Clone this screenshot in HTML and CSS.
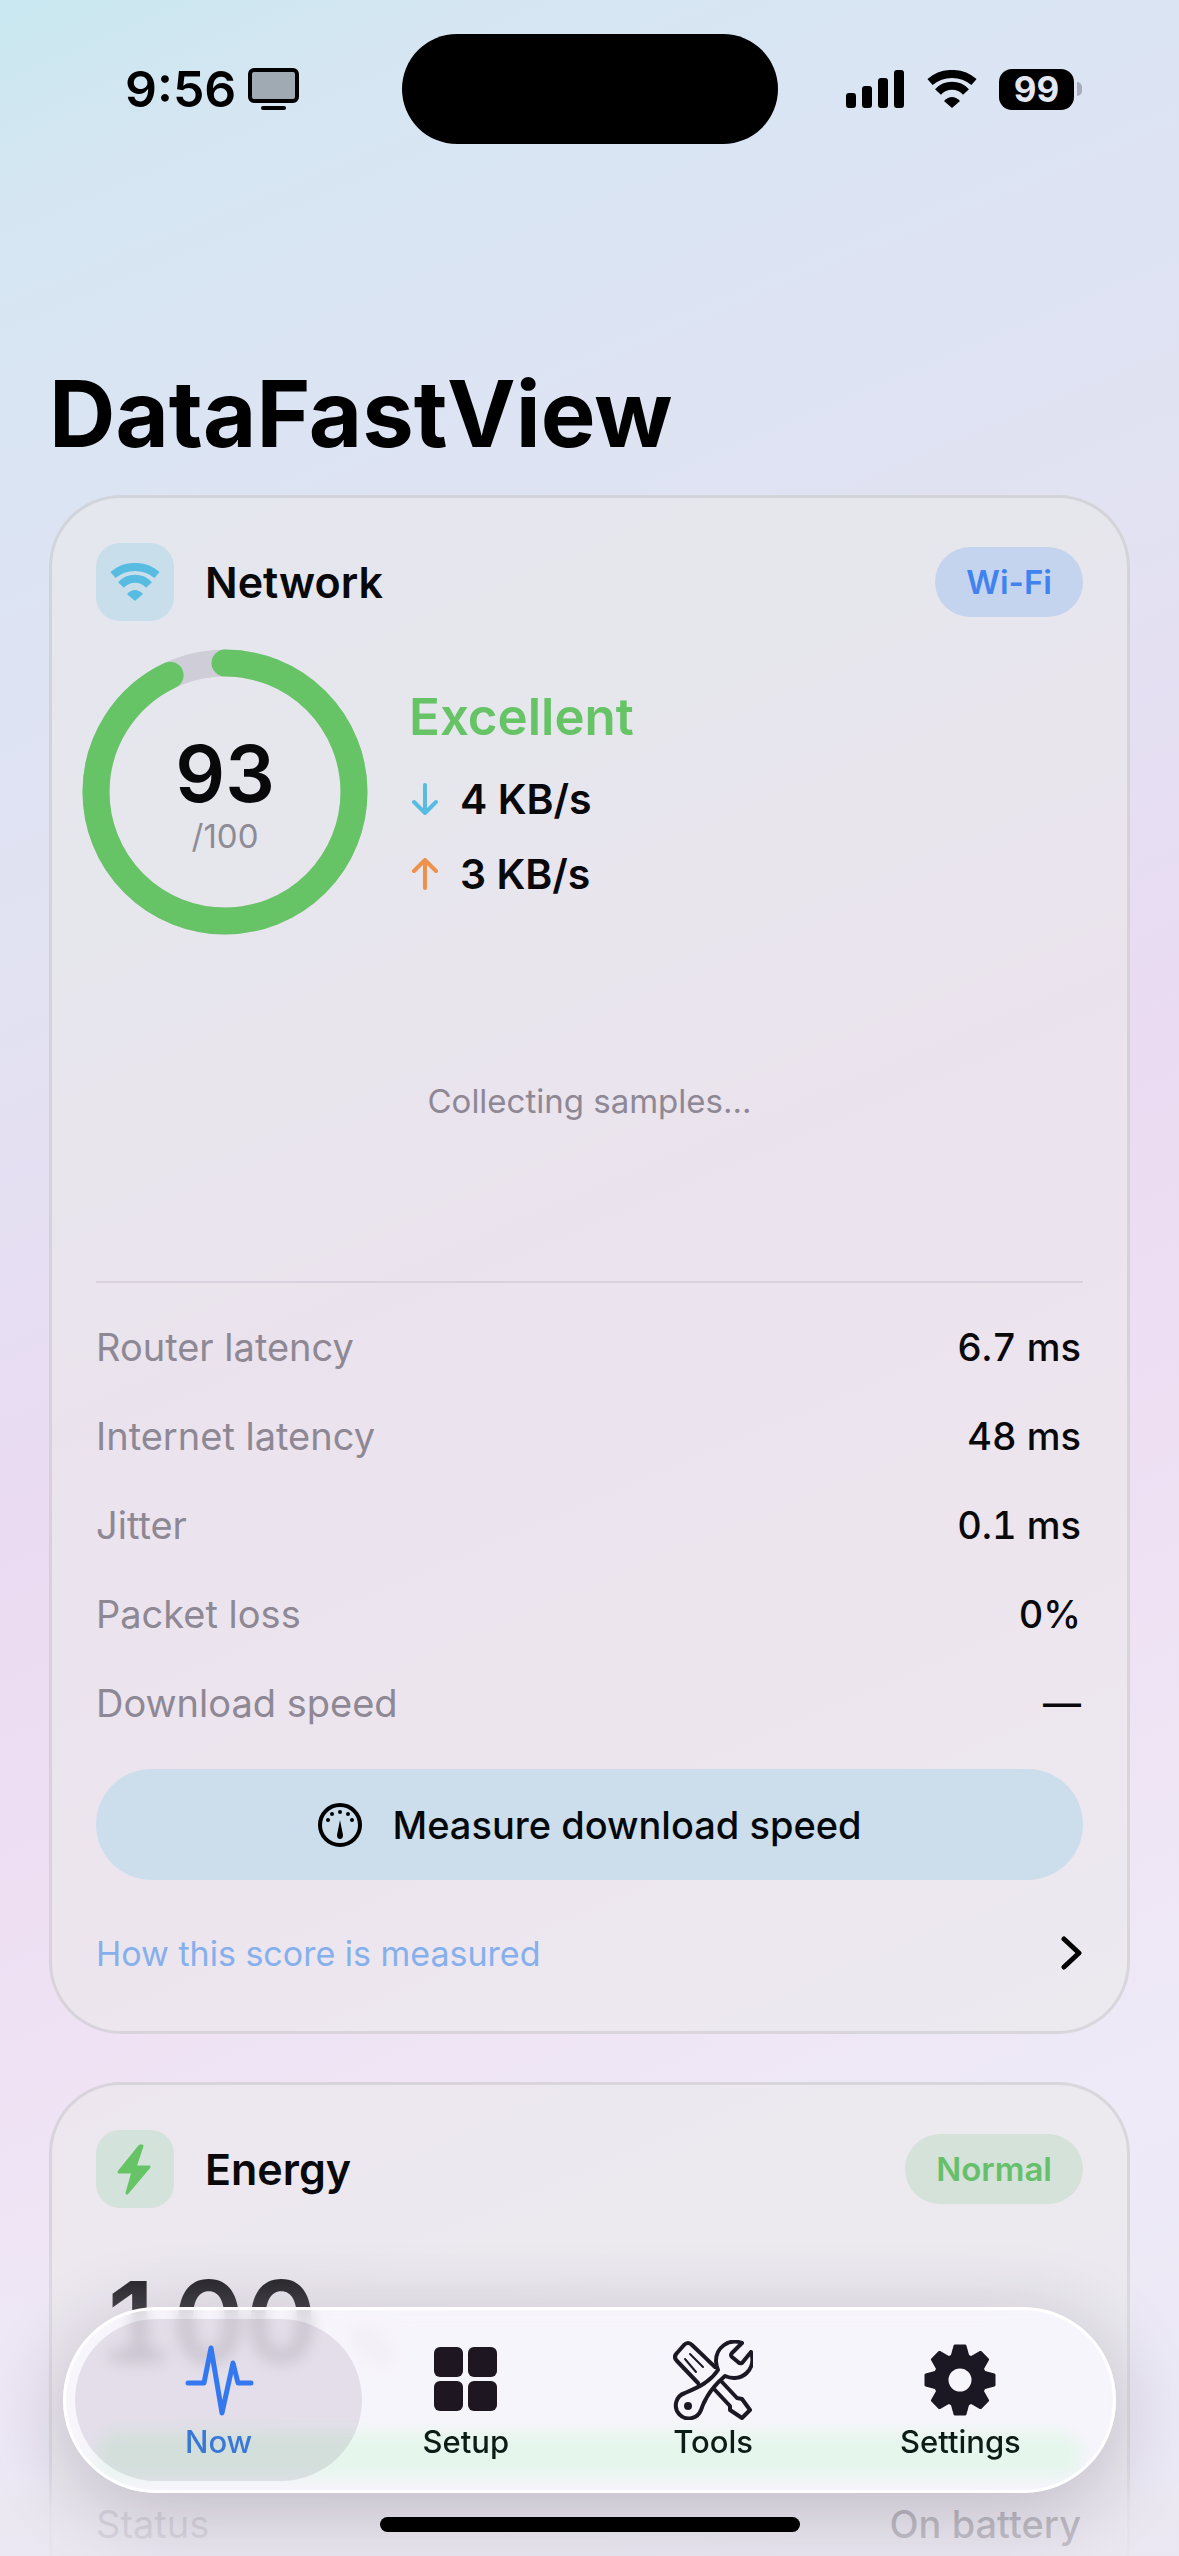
FILE: index.html
```
<!DOCTYPE html>
<html lang="en">
<head>
    <meta charset="utf-8">
    <meta name="viewport" content="width=device-width, initial-scale=1.0">
    <title>DataFastView</title>
    <link rel="stylesheet" href="styles.css">
</head>
<body>
    <div class="screen">
        <div class="statusbar">
            <div class="clock">
                <span>9:56</span>
                <svg width="51" height="42" viewBox="0 0 51 42">
                    <rect x="2" y="2" width="47" height="31" rx="4" fill="#9faab3" stroke="#000" stroke-width="4"/>
                    <rect x="13" y="38" width="25" height="4" rx="2"/>
                </svg>
            </div>
            <div class="island"></div>
            <div class="indicators">
                <svg width="59" height="38" viewBox="0 0 59 38">
                    <rect x="0" y="23" width="10" height="15" rx="3"/>
                    <rect x="16" y="16" width="10" height="22" rx="3"/>
                    <rect x="32" y="8" width="10" height="30" rx="3"/>
                    <rect x="48" y="0" width="10" height="38" rx="3"/>
                </svg>
                <svg width="52" height="38" viewBox="0 0 52 38">
                    <path d="M4 12A34 34 0 0 1 48 12M12 22A19 19 0 0 1 40 22" fill="none" stroke="#000" stroke-width="8"/>
                    <path d="M18 31Q26 23 34 31L26 38Z"/>
                </svg>
                <div class="battery">
                    <span class="level">99</span>
                    <span class="tip"></span>
                </div>
            </div>
        </div>

        <main>
            <h1>DataFastView</h1>

            <section class="card">
                <div class="card-head">
                    <span class="badge blue">
                        <svg width="52" height="38" viewBox="0 0 52 38">
                            <path d="M4 12A34 34 0 0 1 48 12M12 22A19 19 0 0 1 40 22" fill="none" stroke="#58bbe1" stroke-width="8"/>
                            <path d="M18 31Q26 23 34 31L26 38Z" fill="#58bbe1"/>
                        </svg>
                    </span>
                    <h2>Network</h2>
                    <span class="pill wifi">Wi-Fi</span>
                </div>

                <div class="score">
                    <div class="ring">
                        <svg width="286" height="286" viewBox="0 0 286 286">
                            <circle cx="143" cy="143" r="129" fill="none" stroke="#cfcdd7" stroke-width="27"/>
                            <circle cx="143" cy="143" r="129" fill="none" stroke="#66c466" stroke-width="27" stroke-linecap="round" pathLength="100" stroke-dasharray="93 100" transform="rotate(-90 143 143)"/>
                        </svg>
                        <div class="ring-text">
                            <strong>93</strong>
                            <span>/100</span>
                        </div>
                    </div>
                    <div class="rates">
                        <p class="grade">Excellent</p>
                        <p class="rate">
                            <svg width="30" height="32" viewBox="0 0 30 32" fill="none" stroke="#58bbe1" stroke-width="4" stroke-linecap="round" stroke-linejoin="round"><path d="M16 2V29M5 19L16 30L27 19"/></svg>
                            4 KB/s
                        </p>
                        <p class="rate">
                            <svg width="30" height="32" viewBox="0 0 30 32" fill="none" stroke="#ee914a" stroke-width="4" stroke-linecap="round" stroke-linejoin="round"><path d="M16 30V3M5 13L16 2L27 13"/></svg>
                            3 KB/s
                        </p>
                    </div>
                </div>

                <div class="chart">Collecting samples...</div>

                <table class="metrics">
                    <tr><th scope="row">Router latency</th><td>6.7 ms</td></tr>
                    <tr><th scope="row">Internet latency</th><td>48 ms</td></tr>
                    <tr><th scope="row">Jitter</th><td>0.1 ms</td></tr>
                    <tr><th scope="row">Packet loss</th><td>0%</td></tr>
                    <tr><th scope="row">Download speed</th><td>—</td></tr>
                </table>

                <button class="measure" type="button">
                    <svg width="46" height="46" viewBox="0 0 46 46">
                        <circle cx="23" cy="23" r="20" fill="none" stroke="#000" stroke-width="4"/>
                        <circle cx="11" cy="18" r="2"/>
                        <circle cx="15" cy="12" r="2"/>
                        <circle cx="23" cy="10" r="2"/>
                        <circle cx="31" cy="12" r="2"/>
                        <circle cx="35" cy="18" r="2"/>
                        <path d="M23 18L26 33A3 4 0 0 1 20 33Z"/>
                    </svg>
                    Measure download speed
                </button>

                <a class="more" href="#score">
                    How this score is measured
                    <svg width="22" height="34" viewBox="0 0 22 34"><path d="M3 3L18 17L3 31" fill="none" stroke="#000" stroke-width="5" stroke-linecap="round" stroke-linejoin="round"/></svg>
                </a>
            </section>

            <section class="card">
                <div class="card-head">
                    <span class="badge green">
                        <svg width="78" height="78" viewBox="0 0 78 78"><path d="M44 16L23 42H37L31 63L53 37H39L46 16Z" fill="#66c466" stroke="#66c466" stroke-width="3" stroke-linejoin="round"/></svg>
                    </span>
                    <h2>Energy</h2>
                    <span class="pill normal">Normal</span>
                </div>
                <p class="charge">100 <small>%</small></p>
                <div class="charge-bar"></div>
                <table class="metrics plain">
                    <tr><th scope="row">Status</th><td>On battery</td></tr>
                </table>
            </section>
        </main>

        <div class="fade"></div>

        <nav class="tabbar">
            <a class="tab active" href="#now">
                <svg width="80" height="80" viewBox="-6 -5 80 80"><path d="M3 38H19L26 3L37 68L48 18L53 38H66" fill="none" stroke="#3478f0" stroke-width="5" stroke-linecap="round" stroke-linejoin="round"/></svg>
                Now
            </a>
            <a class="tab" href="#setup">
                <svg width="80" height="80" viewBox="0 0 80 80" fill="#1e1722">
                    <rect x="8" y="7" width="29" height="30" rx="6"/>
                    <rect x="42" y="7" width="29" height="30" rx="6"/>
                    <rect x="8" y="41" width="29" height="30" rx="6"/>
                    <rect x="42" y="41" width="29" height="30" rx="6"/>
                </svg>
                Setup
            </a>
            <a class="tab" href="#tools">
                <svg width="80" height="80" viewBox="0 0 80 80" fill="none" stroke="#1c1823" stroke-width="4" stroke-linejoin="round" stroke-linecap="round">
                    <path d="M25 43L4 21Q0 17 4 13L11 5Q15 1 19 5L42 27"/>
                    <path d="M12 19L23 32M17 14L30 27" stroke-width="2"/>
                    <path d="M42 50L57 66V70L69 78L77 70L69 59L64 58L49 42"/>
                    <path d="M69 3C55 -2 43 8 43 21Q43 25 45 30C37 42 26 47 12 53A13 13 0 1 0 28 70C32 58 39 47 52 36C68 43 84 30 78 12L69 23Q67 24 65 22L59 17Q57 15 59 13Z"/>
                    <circle cx="15" cy="66" r="4" fill="#1c1823" stroke="none"/>
                </svg>
                Tools
            </a>
            <a class="tab" href="#settings">
                <svg width="80" height="80" viewBox="-40 -40 80 80" fill="#1c1823">
                    <circle r="19" fill="none" stroke="#1c1823" stroke-width="15"/>
                    <g stroke="#1c1823" stroke-width="3" stroke-linejoin="round">
                        <path d="M-8 -23L-5 -34H5L8 -23ZM-8 23L-5 34H5L8 23Z"/>
                        <path d="M-8 -23L-5 -34H5L8 -23ZM-8 23L-5 34H5L8 23Z" transform="rotate(45)"/>
                        <path d="M-8 -23L-5 -34H5L8 -23ZM-8 23L-5 34H5L8 23Z" transform="rotate(90)"/>
                        <path d="M-8 -23L-5 -34H5L8 -23ZM-8 23L-5 34H5L8 23Z" transform="rotate(135)"/>
                    </g>
                </svg>
                Settings
            </a>
        </nav>
        <div class="home-indicator"></div>
    </div>
</body>
</html>
```

FILE: styles.css
```
* {
    box-sizing: border-box;
}
body {
    margin: 0;
    font-family: Inter, "Liberation Sans", sans-serif;
    font-size: 40px;
    color: #09080b;
}
h1, h2, p {
    margin: 0;
}
svg {
    display: block;
    flex: none;
}
.screen {
    position: relative;
    height: 100vh;
    overflow: hidden;
    background: linear-gradient(157deg, #c9e8f1 0%, #d5e6f2 7%, #dce4f3 18%, #e2e2f2 33%, #eadbf2 50%, #eedff3 62%, #efe5f5 74%, #eeeaf7 84%, #eae9f5 100%);
}

/* status bar */
.statusbar {
    display: grid;
    grid-template-columns: 1fr auto 1fr;
    align-items: center;
    padding: 34px 97px 0;
}
.clock {
    display: flex;
    align-items: center;
    gap: 12px;
    padding-left: 28px;
    font-size: 50px;
    font-weight: 600;
    color: #000;
}
.island {
    width: 376px;
    height: 110px;
    border-radius: 55px;
    background: #000;
}
.indicators {
    display: flex;
    align-items: center;
    justify-content: flex-end;
    gap: 21px;
}
.battery {
    display: flex;
    align-items: center;
    gap: 3px;
}
.level {
    width: 75px;
    height: 41px;
    border-radius: 13px;
    background: #000;
    color: #e3e6f3;
    font-size: 35px;
    font-weight: 700;
    line-height: 41px;
    text-align: center;
}
.tip {
    width: 5px;
    height: 14px;
    border-radius: 0 5px 5px 0;
    background: #a9adb8;
}

main {
    padding: 0 49px;
}
h1 {
    margin: 212px 0 23px;
    font-size: 92px;
    font-weight: 700;
    line-height: 116px;
    color: #000;
}

/* cards */
.card {
    margin-bottom: 48px;
    padding: 45px 44px;
    border: 3px solid rgba(110, 110, 120, 0.16);
    border-radius: 72px;
    background: rgba(235, 234, 234, 0.55);
}
.card-head {
    display: flex;
    align-items: center;
    gap: 31px;
}
.badge {
    display: flex;
    align-items: center;
    justify-content: center;
    width: 78px;
    height: 78px;
    border-radius: 24px;
}
.badge.blue {
    background: #c8deeb;
}
.badge.green {
    background: #d4e2dc;
}
h2 {
    font-size: 43px;
    font-weight: 600;
}
.pill {
    margin-left: auto;
    padding: 0 31px;
    border-radius: 35px;
    font-size: 33px;
    font-weight: 600;
    line-height: 70px;
}
.pill.wifi {
    background: #c5d4ee;
    color: #4083ee;
}
.pill.normal {
    background: #d4e2da;
    color: #66c06b;
}

.score {
    display: flex;
    align-items: center;
    gap: 55px;
    margin-top: 42px;
}
.ring {
    display: grid;
    place-items: center;
    width: 258px;
    height: 258px;
}
.ring > * {
    grid-area: 1 / 1;
}
.ring svg {
    margin: -14px;
}
.ring-text {
    display: flex;
    flex-direction: column;
    align-items: center;
    padding-top: 4px;
    font-size: 33px;
    line-height: 40px;
    color: #8e8b96;
}
.ring-text strong {
    font-size: 78px;
    font-weight: 600;
    line-height: 84px;
    color: #09080b;
}
.rates {
    display: flex;
    flex-direction: column;
    gap: 25px;
}
.grade {
    font-size: 51px;
    font-weight: 600;
    line-height: 64px;
    color: #66c466;
}
.rate {
    display: flex;
    align-items: center;
    gap: 21px;
    font-size: 41px;
    font-weight: 600;
    line-height: 50px;
}
.chart {
    display: flex;
    align-items: center;
    justify-content: center;
    height: 362px;
    border-bottom: 2px solid #dad3df;
    font-size: 33px;
    color: #8e8895;
}

.metrics {
    width: 100%;
    margin-top: 19px;
    border-collapse: collapse;
}
.metrics th, .metrics td {
    height: 89px;
    padding: 0;
    font-size: 38px;
    font-weight: 400;
}
.metrics th {
    text-align: left;
    color: #8e8895;
}
.metrics td {
    padding-right: 2px;
    text-align: right;
    font-weight: 500;
    font-variant-numeric: tabular-nums;
}
.metrics.plain {
    margin-top: 0;
}
.measure {
    display: flex;
    align-items: center;
    justify-content: center;
    gap: 29px;
    width: 100%;
    height: 111px;
    margin-top: 22px;
    border: 0;
    border-radius: 56px;
    background: #ccdeec;
    font-family: inherit;
    font-size: 38px;
    font-weight: 500;
    color: #05080b;
}
.more {
    display: flex;
    align-items: center;
    justify-content: space-between;
    height: 66px;
    margin-top: 40px;
    font-size: 34px;
    color: #86b0ec;
    text-decoration: none;
}

.charge {
    height: 140px;
    margin-top: 43px;
    padding-left: 4px;
    font-size: 112px;
    font-weight: 600;
    line-height: 140px;
    font-variant-numeric: tabular-nums;
}
.charge small {
    font-size: 48px;
    line-height: 48px;
    color: #8e8895;
}
.charge-bar {
    height: 48px;
    margin-top: 40px;
    border-radius: 24px;
    background: #64f078;
}

/* content dissolves under the tab bar */
.fade {
    position: absolute;
    left: 0;
    right: 0;
    bottom: 0;
    height: 320px;
    background: linear-gradient(rgba(236, 233, 244, 0) 0%, rgba(236, 233, 244, 0.25) 22%, rgba(236, 233, 244, 0.35) 75%, rgba(234, 231, 240, 0.78) 84%, rgba(234, 231, 242, 0.84) 100%);
}
.tabbar {
    position: absolute;
    left: 63px;
    right: 63px;
    bottom: 63px;
    display: flex;
    padding: 9px 29px;
    border: 3px solid #fff;
    border-radius: 93px;
    background: rgba(250, 247, 255, 0.8);
    backdrop-filter: blur(8px);
    box-shadow: 0 16px 80px rgba(30, 20, 40, 0.22);
}
.tab {
    position: relative;
    flex: 1;
    display: flex;
    flex-direction: column;
    align-items: center;
    height: 162px;
    padding-top: 21px;
    font-size: 31px;
    font-weight: 500;
    line-height: 44px;
    color: #0c1c16;
    text-decoration: none;
}
.tab.active {
    color: #3a78d8;
}
.tab.active::before {
    content: "";
    position: absolute;
    inset: 0 -20px;
    z-index: -1;
    border-radius: 81px;
    background: rgba(60, 30, 70, 0.1);
}
.home-indicator {
    position: absolute;
    left: 50%;
    bottom: 24px;
    width: 420px;
    height: 15px;
    margin-left: -210px;
    border-radius: 8px;
    background: #000;
}
```
